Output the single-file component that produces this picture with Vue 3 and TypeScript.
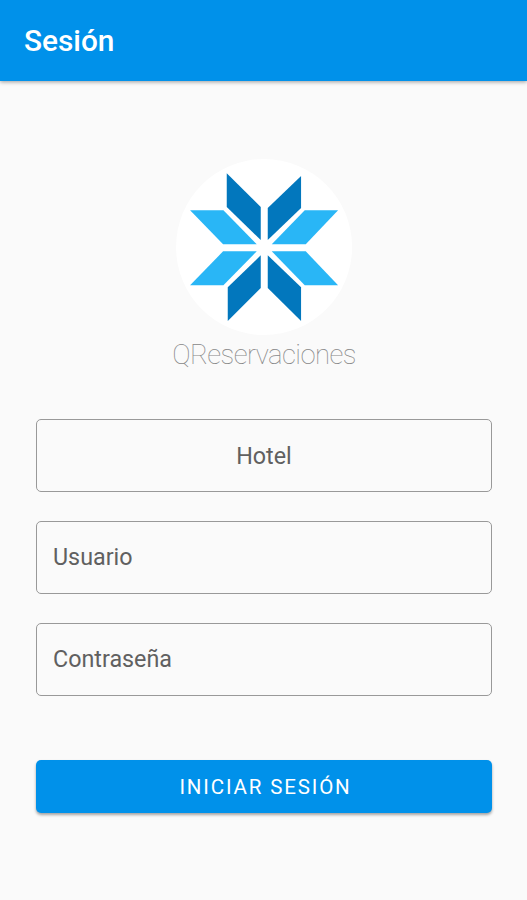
<script setup lang="ts">
import { ref } from 'vue'

const hotel = ref('')
const usuario = ref('')
const contrasena = ref('')
</script>

<template>
  <div class="screen">
    <header class="app-bar"><h1 class="title">Sesión</h1></header>
    <main class="content">
      <svg class="logo" viewBox="-2.25 0 600 570" aria-hidden="true">
        <circle cx="298" cy="291" r="264" fill="#fff" />
        <g fill="#0277bd">
          <path d="M186 70L288 171V270L186 171Z" />
          <path d="M409 78V174L309 270V174Z" />
          <path d="M288 316V414L189 513V412Z" />
          <path d="M309 316L409 412V513L309 414Z" />
        </g>
        <g fill="#29b6f6">
          <path d="M76 181H176L276 283H175Z" />
          <path d="M520 181L423 283H321L420 181Z" />
          <path d="M175 304H276L176 406H76Z" />
          <path d="M321 304H423L520 406H420Z" />
        </g>
      </svg>
      <p class="brand">QReservaciones</p>
      <form class="form" @submit.prevent>
        <input v-model="hotel" class="field centered" type="text" placeholder="Hotel" />
        <input v-model="usuario" class="field" type="text" placeholder="Usuario" />
        <input v-model="contrasena" class="field" type="password" placeholder="Contraseña" />
        <button class="submit" type="submit"><span class="submit-text">INICIAR SESIÓN</span></button>
      </form>
    </main>
  </div>
</template>

<style>
body {
  background: #fafafa;
}
</style>

<style scoped>
.screen {
  min-height: 900px;
  background: #fafafa;
  font-family: Roboto, "Liberation Sans", sans-serif;
}
.app-bar {
  display: flex;
  align-items: center;
  box-sizing: border-box;
  height: 80.5px;
  padding: 2px 24px 0;
  background: #0091ea;
  box-shadow: 0 1px 4px rgba(0, 0, 0, 0.38);
}
.title {
  margin: 0;
  color: #fff;
  font-size: 29.8px;
  font-weight: 500;
  line-height: 36px;
}
.content {
  display: flex;
  flex-direction: column;
  align-items: center;
  padding: 69.5px 35px 0 36px;
}
.logo {
  display: block;
  width: 200px;
  height: 190px;
}
.brand {
  margin: -2px 0 0;
  color: #888;
  font-size: 27.5px;
  font-weight: 100;
  line-height: 34px;
  letter-spacing: -0.6px;
}
.form {
  display: flex;
  flex-direction: column;
  gap: 29px;
  width: 100%;
  margin-top: 47px;
}
.field {
  box-sizing: border-box;
  width: 100%;
  height: 73px;
  padding: 0 16px 1px;
  border: 1px solid #999;
  border-radius: 5px;
  outline: none;
  background: transparent;
  color: #333;
  font-family: inherit;
  font-size: 23.3px;
}
.field::placeholder {
  color: #606060;
  opacity: 1;
}
.centered {
  padding-bottom: 0;
  text-align: center;
}
.submit {
  height: 52.5px;
  margin-top: 35px;
  padding: 0;
  border: 0;
  border-radius: 5px;
  background: #0091ea;
  box-shadow: 0 2px 3px rgba(0, 0, 0, 0.35);
  color: #fff;
  font-family: inherit;
  font-size: 20.5px;
  font-weight: 400;
  letter-spacing: 1.85px;
}
.submit-text {
  display: block;
  padding: 2px 0 0 3px;
}
</style>
